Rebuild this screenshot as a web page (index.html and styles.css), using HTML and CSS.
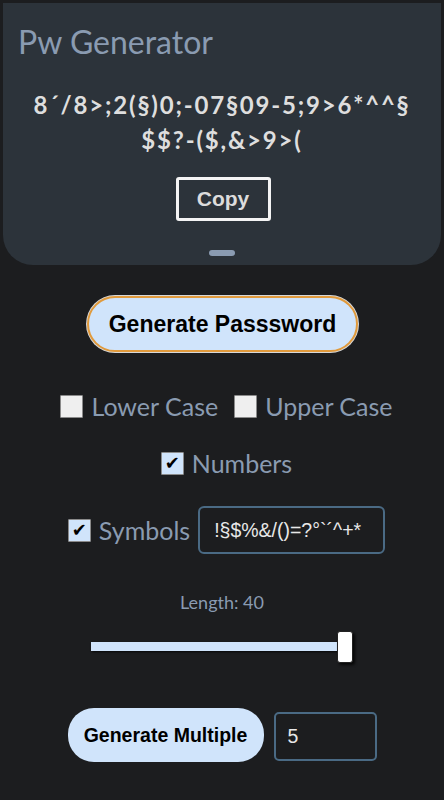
FILE: index.html
```html
<!DOCTYPE html>
<html>
<head>
<meta charset="utf-8">
<link rel="stylesheet" href="styles.css">
</head>
<body>
<div class="card">
  <h1 class="title">Pw Generator</h1>
  <p class="password">8´/8&gt;;2(§)0;-07§09-5;9&gt;6*^^§<br>$$?-($,&amp;&gt;9&gt;(</p>
  <div class="copy-wrap"><button class="copy">Copy</button></div>
  <div class="handle"></div>
</div>
<main class="main">
  <button class="gen">Generate Passsword</button>
  <div class="row row1">
    <label class="opt"><span class="box"></span>Lower Case</label>
    <label class="opt"><span class="box"></span>Upper Case</label>
  </div>
  <div class="row row2">
    <label class="opt"><span class="box checked">✔</span>Numbers</label>
  </div>
  <div class="row row3">
    <label class="opt"><span class="box checked">✔</span>Symbols</label>
    <div class="field symbols">!§$%&amp;/()=?°`´^+*</div>
  </div>
  <div class="length">Length: 40</div>
  <div class="slider">
    <div class="track"></div>
    <div class="thumb"></div>
  </div>
  <div class="row row4">
    <button class="multi">Generate Multiple</button>
    <div class="field count">5</div>
  </div>
</main>
</body>
</html>
```
FILE: styles.css
```css
html, body {
  margin: 0;
  padding: 0;
  background: #1c1d1f;
  font-family: Lato, "Noto Sans", sans-serif;
}
body {
  width: 444px;
  height: 800px;
  overflow: hidden;
}
.card {
  margin: 3px 3px 0 3px;
  background: #2c333a;
  border-radius: 0 0 30px 30px;
  height: 262px;
  box-sizing: border-box;
  padding-top: 21px;
  display: flex;
  flex-direction: column;
}
.title {
  margin: 0 0 0 15px;
  font-weight: 400;
  font-size: 32px;
  line-height: 36px;
  color: #8a9bb1;
}
.password {
  margin: 27px 0 0 0;
  text-align: center;
  color: #dedede;
  font-size: 24px;
  font-weight: 700;
  line-height: 35px;
  letter-spacing: 1.8px;
}
.copy-wrap {
  display: flex;
  justify-content: center;
  margin-top: 20px;
}
.copy {
  width: 95px;
  height: 44px;
  background: transparent;
  border: 3px solid #f4f4f4;
  border-radius: 3px;
  color: #dcdcdc;
  font-family: "Liberation Sans", Arial, sans-serif;
  font-weight: 700;
  font-size: 21px;
  padding: 0;
  margin-left: 2px;
}
.handle {
  align-self: center;
  width: 26px;
  height: 6px;
  border-radius: 3px;
  background: #8a9bb1;
  margin-top: 29px;
}
.main {
  display: flex;
  flex-direction: column;
  align-items: center;
}
.gen {
  margin-top: 31px;
  width: 271px;
  height: 56px;
  border-radius: 28px;
  background: #d0e4fb;
  border: 2px solid #e09a3c;
  box-shadow: 0 0 0 1px #d8d8d8;
  color: #000;
  font-family: "Liberation Sans", Arial, sans-serif;
  font-weight: 700;
  font-size: 23px;
  padding: 0;
  margin-left: 1px;
}
.row {
  display: flex;
  align-items: center;
  gap: 10px;
}
.row1, .row2, .row3 { margin-left: 9px; }
.row1 { margin-top: 40px; gap: 16px; }
.row2 { margin-top: 29px; }
.row3 { margin-top: 29px; gap: 8px; }
.opt {
  display: flex;
  align-items: center;
  gap: 8px;
  color: #8a9bb1;
  font-size: 25px;
  line-height: 28px;
}
.box {
  width: 21px;
  height: 21px;
  background: #efefef;
  border: 1px solid #8a8a8a;
  border-radius: 1px;
  display: flex;
  align-items: center;
  justify-content: center;
  font-size: 18px;
  font-weight: 700;
  color: #000;
  line-height: 1;
  font-family: "DejaVu Sans", sans-serif;
}
.box.checked {
  background: #d0e4fb;
}
.field {
  border: 2px solid #4a6a84;
  border-radius: 6px;
  color: #e8e8e8;
  font-family: "Liberation Sans", Arial, sans-serif;
  font-size: 19.5px;
  box-sizing: border-box;
  display: flex;
  align-items: center;
}
.symbols {
  width: 187px;
  height: 48px;
  padding-left: 14px;
}
.length {
  margin-top: 38px;
  color: #8a9bb1;
  font-size: 18px;
  line-height: 20px;
}
.slider {
  margin-top: 18px;
  width: 262px;
  height: 33px;
  display: flex;
  align-items: center;
}
.track {
  width: 246px;
  height: 9px;
  background: #d0e4fb;
  box-shadow: 1px 1px 2px rgba(0,0,0,0.8);
}
.thumb {
  width: 16px;
  height: 32px;
  background: #fff;
  border-radius: 3px;
  border: 1px solid #222;
  box-sizing: border-box;
  box-shadow: 2px 2px 3px rgba(0,0,0,0.8);
}
.row4 {
  margin-top: 45px;
  gap: 10px;
}
.multi {
  width: 196px;
  height: 54px;
  border-radius: 26px;
  background: #d0e4fb;
  border: none;
  color: #000;
  font-family: "Liberation Sans", Arial, sans-serif;
  font-weight: 700;
  font-size: 19.5px;
  padding: 0;
}
.count {
  width: 103px;
  height: 49px;
  padding-left: 12px;
  border-radius: 5px;
  margin-top: 2px;
}
```
